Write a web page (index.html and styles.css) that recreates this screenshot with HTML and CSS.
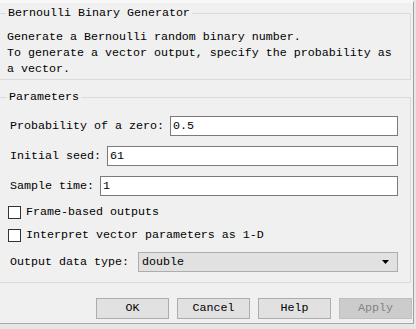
FILE: index.html
```html
<!DOCTYPE html>
<html>
<head>
<meta charset="utf-8">
<link rel="stylesheet" href="styles.css">
</head>
<body>
<div class="dialog">
  <fieldset class="group desc">
    <legend class="title">Bernoulli Binary Generator</legend>
    <div class="text">Generate a Bernoulli random binary number.<br>To generate a vector output, specify the probability as<br>a vector.</div>
  </fieldset>
  <fieldset class="group params">
    <legend class="title">Parameters</legend>
    <div class="rows">
      <div class="row"><span class="label">Probability of a zero:</span><div class="input">0.5</div></div>
      <div class="row"><span class="label">Initial seed:</span><div class="input">61</div></div>
      <div class="row"><span class="label">Sample time:</span><div class="input">1</div></div>
      <div class="check"><span class="box"></span><span class="clabel">Frame-based outputs</span></div>
      <div class="check"><span class="box"></span><span class="clabel">Interpret vector parameters as 1-D</span></div>
      <div class="row"><span class="label">Output data type:</span><div class="select"><span>double</span><svg width="8" height="5" viewBox="0 0 8 5"><path d="M0 0H7L3.5 4Z" fill="#000"/></svg></div></div>
    </div>
  </fieldset>
  <div class="buttons">
    <div class="btn">OK</div>
    <div class="btn">Cancel</div>
    <div class="btn">Help</div>
    <div class="btn disabled">Apply</div>
  </div>
</div>
</body>
</html>
```
FILE: styles.css
```css
html, body {
  margin: 0;
  padding: 0;
}
body {
  width: 416px;
  height: 329px;
  background: #e6e6e6;
  font-family: "Liberation Mono", "DejaVu Sans Mono", monospace;
  font-size: 11.67px;
  color: #000;
  overflow: hidden;
}
.dialog {
  width: 414px;
  height: 324px;
  box-sizing: border-box;
  background: #f0f0f0;
  border-top: 3px solid #f8f8f8;
  border-right: 1px solid #a0a0a0;
  border-bottom: 1px solid #a8a8a8;
  display: flex;
  flex-direction: column;
  overflow: hidden;
}
.group {
  box-sizing: border-box;
  width: 412px;
  margin: 0 0 0 -1px;
  border: 1px solid #dadada;
  min-inline-size: 0;
}
.title {
  line-height: 17px;
  padding: 0 2px;
  margin-left: -1px;
}
.desc {
  margin-top: 2px;
  padding: 7px 0 2px 7px;
}
.text {
  line-height: 16px;
  white-space: nowrap;
}
.params {
  margin-top: 9px;
  padding: 10px 12px 10px 8px;
}
.rows {
  display: flex;
  flex-direction: column;
  gap: 10px;
}
.row {
  display: flex;
  align-items: center;
  height: 20px;
}
.label {
  margin-left: 2px;
  margin-right: 6px;
  white-space: nowrap;
}
.input {
  flex: 1;
  height: 20px;
  box-sizing: border-box;
  background: #fff;
  border: 1px solid #7a7a7a;
  padding-left: 2px;
  line-height: 18px;
}
.check {
  display: flex;
  align-items: center;
  height: 13px;
}
.box {
  width: 13px;
  height: 13px;
  box-sizing: border-box;
  border: 1px solid #333;
  background: #fff;
  margin-right: 5px;
}
.clabel {
  white-space: nowrap;
  line-height: 13px;
}
.select {
  flex: 1;
  height: 20px;
  box-sizing: border-box;
  background: #e1e1e1;
  border: 1px solid #adadad;
  display: flex;
  align-items: center;
  justify-content: space-between;
  padding: 0 7px 0 3px;
  margin-left: 3px;
}
.buttons {
  display: flex;
  justify-content: flex-end;
  gap: 8px;
  margin-top: 15px;
  padding-right: 1px;
}
.btn {
  width: 73px;
  height: 21px;
  box-sizing: border-box;
  background: #e1e1e1;
  border: 1px solid #adadad;
  text-align: center;
  line-height: 19px;
}
.btn.disabled {
  background: #cccccc;
  border-color: #bfbfbf;
  color: #838383;
}
```
